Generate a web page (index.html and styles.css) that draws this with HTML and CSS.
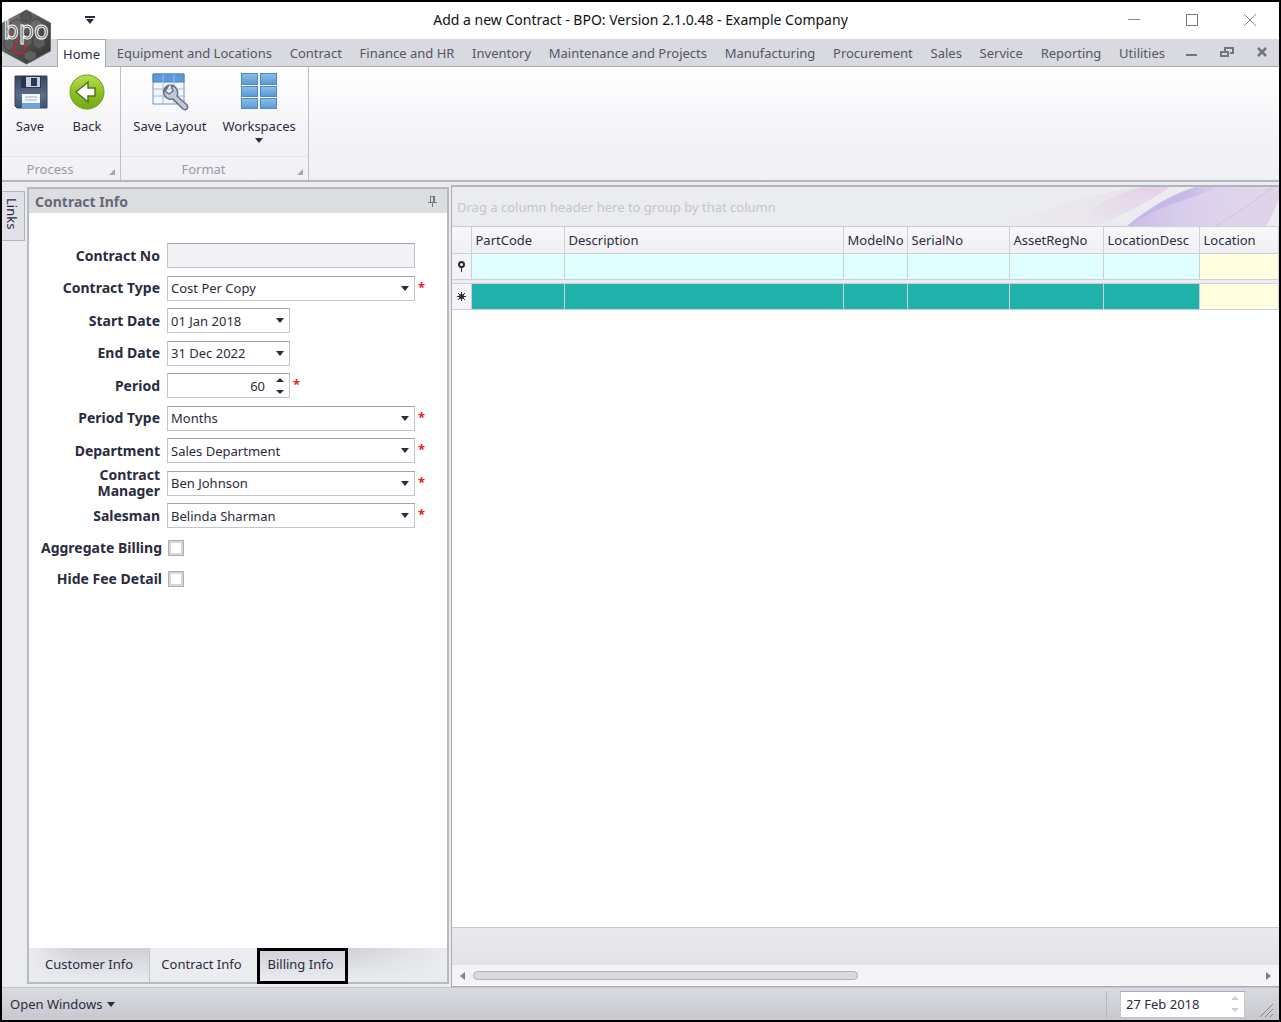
FILE: index.html
```html
<!DOCTYPE html>
<html lang="en">
<head>
    <meta charset="UTF-8">
    <meta name="viewport" content="width=device-width, initial-scale=1.0">
    <title>Add a new Contract - BPO: Version 2.1.0.48 - Example Company</title>
    <link rel="stylesheet" href="styles.css">
</head>
<body>
<div class="window">

    <header class="title-bar">
        <button class="quick-access" aria-label="Customize quick access">
            <svg width="10" height="8" viewBox="0 0 10 8"><path d="M0 0h10v2H0zM1 3h8L5 8z" fill="#2b2b40"/></svg>
        </button>
        <h1>Add a new Contract - BPO: Version 2.1.0.48 - Example Company</h1>
        <div class="window-buttons">
            <button aria-label="Minimize"><svg width="14" height="14" viewBox="0 0 14 14"><path d="M1 6.500h12" stroke="#888" fill="none"/></svg></button>
            <button aria-label="Maximize"><svg width="14" height="14" viewBox="0 0 14 14"><path d="M1.500 1.500h11v11h-11z" stroke="#777" fill="none"/></svg></button>
            <button aria-label="Close"><svg width="14" height="14" viewBox="0 0 14 14"><path d="M1 1l12 12M13 1L1 13" stroke="#888" fill="none"/></svg></button>
        </div>
    </header>

    <!-- Application logo, sits over the title bar and the tabs -->
    <svg class="logo" width="50" height="56" viewBox="0 0 50 56" role="img" aria-label="BPO">
        <defs>
            <linearGradient id="logoFill" x1="0" y1="0" x2="1" y2="1">
                <stop offset="0" stop-color="#858585"/>
                <stop offset=".5" stop-color="#525252"/>
                <stop offset="1" stop-color="#303030"/>
            </linearGradient>
        </defs>
        <path d="M24.500 1L48.500 14v28L24.500 55 .5 42V14z" fill="url(#logoFill)" stroke="#666"/>
        <g fill="#6a6a6a" stroke="#474747">
            <path d="M15 10l6 3v7l-6 4-6-4v-7zM34 10l6 3v7l-6 4-6-4v-7z"/>
            <path d="M24 25l6 3v7l-6 4-6-4v-7zM37 26l6 3v7l-6 4-6-4v-7z" fill="#5c5c5c"/>
            <path d="M7 29l5 3v6l-5 4-5-4v-6zM28 41l6 3v5l-6 4-6-4v-5z" fill="#616161"/>
            <path d="M24 2l5 3v5l-5 3-5-3V5z" fill="#555"/>
        </g>
        <path d="M14 34l4-2 5 3v6l-5 4-5-2-1-5z" fill="none" stroke="#c8262c" stroke-width="1.500"/>
        <text x="24" y="30" text-anchor="middle" class="logo-text">bpo</text>
    </svg>

    <nav class="ribbon-tabs">
        <div class="tab-list">
            <a href="#" class="active">Home</a>
            <a href="#">Equipment and Locations</a>
            <a href="#">Contract</a>
            <a href="#">Finance and HR</a>
            <a href="#">Inventory</a>
            <a href="#">Maintenance and Projects</a>
            <a href="#">Manufacturing</a>
            <a href="#">Procurement</a>
            <a href="#">Sales</a>
            <a href="#">Service</a>
            <a href="#">Reporting</a>
            <a href="#">Utilities</a>
        </div>
        <div class="child-buttons">
            <button aria-label="Minimize document"><svg width="14" height="12" viewBox="0 0 14 12"><path d="M1 7h11v2H1z" fill="#74747f"/></svg></button>
            <button aria-label="Restore document"><svg width="14" height="12" viewBox="0 0 14 12"><path d="M5 4V1h8v5h-3" fill="none" stroke="#74747f" stroke-width="2"/><path d="M1 5h7v4H1z" fill="none" stroke="#74747f" stroke-width="2"/></svg></button>
            <button aria-label="Close document"><svg width="14" height="12" viewBox="0 0 14 12"><path d="M3 1l8 8M11 1L3 9" fill="none" stroke="#74747f" stroke-width="2.500"/></svg></button>
        </div>
    </nav>

    <section class="ribbon">
        <div class="group group-process">
            <div class="group-items">
                <button>
                    <svg width="36" height="40" viewBox="0 0 36 40">
                        <defs><linearGradient id="disk" x1="0" y1="0" x2="0" y2="1"><stop offset="0" stop-color="#39435f"/><stop offset=".6" stop-color="#5c6c8c"/><stop offset="1" stop-color="#3a5478"/></linearGradient></defs>
                        <path d="M3 4h32v32H5l-2-2z" fill="url(#disk)" stroke="#34405b"/>
                        <path d="M9 4h20v12H9z" fill="#2b344c"/>
                        <path d="M14 5h14v10H14z" fill="#c9d0dd"/>
                        <path d="M19 6h6v8h-6z" fill="#2d3650"/>
                        <path d="M10 22h18v14H10z" fill="#f4f8fd"/>
                        <path d="M10 31h18v5H10z" fill="#6ba4da"/>
                        <path d="M13 25h12M13 28h12" stroke="#a3adbd"/>
                    </svg>
                    <span>Save</span>
                </button>
                <button>
                    <svg width="36" height="40" viewBox="0 0 36 40">
                        <defs><linearGradient id="green" x1="0" y1="0" x2="0" y2="1"><stop offset="0" stop-color="#b9e04a"/><stop offset=".5" stop-color="#8cc024"/><stop offset="1" stop-color="#74aa16"/></linearGradient></defs>
                        <circle cx="18" cy="20" r="17" fill="url(#green)" stroke="#6a9a1a"/>
                        <path d="M7 20L19 10v6h7v8h-7v6z" fill="#fff" stroke="#4b7a1c" stroke-width="1.500"/>
                    </svg>
                    <span>Back</span>
                </button>
            </div>
            <div class="group-caption">Process<i class="corner"></i></div>
        </div>
        <div class="group group-format">
            <div class="group-items">
                <button>
                    <svg width="38" height="40" viewBox="0 0 38 40">
                        <path d="M2 2h31v30H2z" fill="#f3f7fc" stroke="#7590ba"/>
                        <path d="M2 2h31v8H2z" fill="#5b9bdb" stroke="#4a7fbd"/>
                        <path d="M2 17h31M2 24h31M12 2v30M23 2v30" stroke="#a6bcdb"/>
                        <path d="M18 13c-4 2-6 5-5 9 1 4 5 6 9 5l10 10c3 2 6-1 4-4L26 24c2-5-1-10-6-11l2 6-4 3-4-3z" fill="#c3c9d4" stroke="#66708a" stroke-width="1.500" stroke-linejoin="round"/>
                    </svg>
                    <span>Save Layout</span>
                </button>
                <button>
                    <svg width="38" height="40" viewBox="0 0 38 40">
                        <defs><linearGradient id="tile" x1="0" y1="0" x2="0" y2="1"><stop offset="0" stop-color="#8cbfea"/><stop offset="1" stop-color="#5a98d3"/></linearGradient></defs>
                        <g fill="url(#tile)" stroke="#4c88c4">
                            <rect x="1.500" y="1.500" width="16" height="11"/><rect x="20.500" y="1.500" width="16" height="11"/>
                            <rect x="1.500" y="14.500" width="16" height="10"/><rect x="20.500" y="14.500" width="16" height="10"/>
                            <rect x="1.500" y="26.500" width="16" height="10"/><rect x="20.500" y="26.500" width="16" height="10"/>
                        </g>
                    </svg>
                    <span>Workspaces</span>
                    <i class="arrow-down"></i>
                </button>
            </div>
            <div class="group-caption">Format<i class="corner"></i></div>
        </div>
    </section>

    <main class="workspace">
        <aside class="side-strip"><button>Links</button></aside>

        <section class="dock-panel">
            <header class="dock-header">
                <h2>Contract Info</h2>
                <button aria-label="Auto hide"><svg width="9" height="12" viewBox="0 0 9 12"><path d="M2.500 1v6M2 1.500h5M0 7.500h9M4.500 8v4" stroke="#777783" fill="none"/><path d="M5 1h2v6H5z" fill="#777783"/></svg></button>
            </header>

            <form class="contract-form">
                <div class="fields">
                    <label for="contractNo">Contract No</label>
                    <div class="field"><input type="text" id="contractNo" disabled></div>

                    <label for="contractType">Contract Type</label>
                    <div class="field"><span class="combo"><select id="contractType"><option>Cost Per Copy</option></select></span><b class="required">*</b></div>

                    <label for="startDate">Start Date</label>
                    <div class="field"><span class="combo short"><input type="text" id="startDate" value="01 Jan 2018"></span></div>

                    <label for="endDate">End Date</label>
                    <div class="field"><span class="combo short"><input type="text" id="endDate" value="31 Dec 2022"></span></div>

                    <label for="period">Period</label>
                    <div class="field"><span class="spinner short"><input type="number" id="period" value="60"></span><b class="required">*</b></div>

                    <label for="periodType">Period Type</label>
                    <div class="field"><span class="combo"><select id="periodType"><option>Months</option></select></span><b class="required">*</b></div>

                    <label for="department">Department</label>
                    <div class="field"><span class="combo"><select id="department"><option>Sales Department</option></select></span><b class="required">*</b></div>

                    <label for="manager">Contract Manager</label>
                    <div class="field"><span class="combo"><select id="manager"><option>Ben Johnson</option></select></span><b class="required">*</b></div>

                    <label for="salesman">Salesman</label>
                    <div class="field"><span class="combo"><select id="salesman"><option>Belinda Sharman</option></select></span><b class="required">*</b></div>
                </div>
                <div class="checks">
                    <label for="aggregate">Aggregate Billing</label>
                    <input type="checkbox" id="aggregate">
                    <label for="hideFee">Hide Fee Detail</label>
                    <input type="checkbox" id="hideFee">
                </div>
            </form>

            <div class="dock-tabs">
                <button class="first">Customer Info</button>
                <button class="active">Contract Info</button>
                <button class="boxed">Billing Info</button>
                <span class="rest"></span>
            </div>
        </section>

        <section class="grid-panel">
            <div class="group-by">
                <svg class="swirl" width="340" height="40" viewBox="0 0 340 40">
                    <defs>
                        <linearGradient id="haze" x1="0" y1="0" x2="1" y2="0"><stop offset="0" stop-color="#ebebef"/><stop offset="1" stop-color="#e8e2ea"/></linearGradient>
                        <linearGradient id="pink" x1="0" y1="1" x2="1" y2="0"><stop offset="0" stop-color="#ebebef"/><stop offset=".5" stop-color="#e7ddea"/><stop offset="1" stop-color="#e6cfe8"/></linearGradient>
                        <linearGradient id="violet" x1="0" y1="0" x2="1" y2="0"><stop offset="0" stop-color="#c9bbe8"/><stop offset=".4" stop-color="#d9cfec"/><stop offset="1" stop-color="#e2d9ec"/></linearGradient>
                        <linearGradient id="edge" x1="0" y1="0" x2="1" y2="0"><stop offset="0" stop-color="#c4b3e7"/><stop offset=".7" stop-color="#c9baea"/><stop offset="1" stop-color="#d9cfec"/></linearGradient>
                    </defs>
                    <path d="M60 40Q140 8 200 0h30Q190 22 150 40z" fill="url(#haze)"/>
                    <path d="M130 40Q165 8 205 0h26Q200 22 155 40z" fill="url(#pink)"/>
                    <path d="M187 40Q220 12 256 0h84v12Q332 30 326 40z" fill="url(#violet)"/>
                    <path d="M187 40Q220 12 256 0h22Q262 8 242 14 212 24 187 40z" fill="url(#edge)"/>
                    <path d="M275 40Q306 22 330 0h10v10Q334 30 326 40z" fill="#dfd3e9"/>
                    <path d="M275 40Q306 22 334 0" fill="none" stroke="#d3c1e2"/>
                </svg>
                <span>Drag a column header here to group by that column</span>
            </div>
            <table>
                <colgroup>
                    <col class="c-mark"><col class="c-part"><col class="c-desc"><col class="c-model"><col class="c-serial"><col class="c-asset"><col class="c-locdesc"><col>
                </colgroup>
                <thead>
                    <tr><th></th><th>PartCode</th><th>Description</th><th>ModelNo</th><th>SerialNo</th><th>AssetRegNo</th><th>LocationDesc</th><th>Location</th></tr>
                </thead>
                <tbody>
                    <tr class="filter-row">
                        <td class="mark"><svg width="9" height="11" viewBox="0 0 9 11"><circle cx="4.500" cy="3.500" r="2.500" fill="none" stroke="#2b2b40" stroke-width="2"/><path d="M2 5h5L5 7v4H4V7z" fill="#2b2b40"/></svg></td>
                        <td></td><td></td><td></td><td></td><td></td><td></td><td class="location"></td>
                    </tr>
                    <tr class="separator"><td colspan="8"></td></tr>
                    <tr class="new-row">
                        <td class="mark"><svg width="9" height="9" viewBox="0 0 9 9"><circle cx="4.500" cy="4.500" r="2.500" fill="#2b2b40"/><path d="M4.500 0v9M0 4.500h9M1 1l7 7M8 1L1 8" stroke="#2b2b40" fill="none"/></svg></td>
                        <td></td><td></td><td></td><td></td><td></td><td></td><td class="location"></td>
                    </tr>
                </tbody>
            </table>
            <div class="grid-body"></div>
            <div class="grid-footer"></div>
            <div class="scrollbar">
                <button class="left" aria-label="Scroll left"></button>
                <div class="track"><div class="thumb"></div></div>
                <button class="right" aria-label="Scroll right"></button>
            </div>
        </section>
    </main>

    <footer class="status-bar">
        <button class="open-windows">Open Windows<i class="arrow-down"></i></button>
        <div class="status-right">
            <span class="spinner dim"><input type="text" value="27 Feb 2018" aria-label="Working date"></span>
            <svg width="16" height="16" viewBox="0 0 16 16"><path d="M1 15L14 2M6 15l8-8M11 15l3-3" stroke="#85858f" fill="none"/></svg>
        </div>
    </footer>

</div>
</body>
</html>
```

FILE: styles.css
```css
* {
    box-sizing: border-box;
}

body {
    margin: 0;
    font-family: "Noto Sans", "Open Sans", sans-serif;
    font-size: 13px;
    color: #2b2b40;
}

button, input, select {
    font: inherit;
    color: inherit;
    margin: 0;
}

button {
    background: none;
    border: none;
    padding: 0;
}

svg {
    display: block;
}

h1, h2 {
    margin: 0;
}

.window {
    position: relative;
    display: flex;
    flex-direction: column;
    min-height: 100vh;
    border: 2px solid #000;
    background: #ebecf0;
}

/* Title bar */
.title-bar {
    display: grid;
    grid-template-columns: 1fr auto 1fr;
    align-items: center;
    height: 37px;
    padding-bottom: 2px;
    background: #fff;
}

.title-bar h1 {
    font-size: 14px;
    font-weight: normal;
    color: #111;
}

.quick-access {
    justify-self: start;
    margin-left: 83px;
}

.window-buttons {
    display: flex;
    justify-content: flex-end;
    gap: 44px;
    padding-right: 22px;
}

.logo {
    position: absolute;
    top: 7px;
    left: 0;
    z-index: 1;
}

.logo-text {
    font-family: "DejaVu Sans", sans-serif;
    font-size: 24px;
    fill: #555;
    stroke: #fff;
}

/* Ribbon */
.ribbon-tabs {
    display: flex;
    height: 28px;
    padding: 0 10px 0 55px;
    background: #d9dae0;
    border-bottom: 1px solid #a9aab3;
}

.tab-list {
    display: flex;
    flex: 1;
    justify-content: space-between;
}

.tab-list a {
    color: #555565;
    text-decoration: none;
    line-height: 29px;
}

.tab-list .active {
    height: 28px;
    padding: 0 5px;
    margin-right: -7px;
    background: #fff;
    border: 1px solid #a9aab3;
    border-bottom: none;
    color: #2b2b40;
    line-height: 28px;
}

.child-buttons {
    display: flex;
    align-items: center;
    gap: 21px;
    margin-left: 20px;
}

.ribbon {
    display: flex;
    height: 115px;
    background: linear-gradient(#fff, #f4f4f8 60%, #f0f0f5);
    border-bottom: 2px solid #b5b6bd;
}

.group {
    display: flex;
    flex-direction: column;
    justify-content: space-between;
    border-right: 1px solid #bfc0c8;
}

.group-process {
    width: 119px;
}

.group-format {
    width: 188px;
}

.group-items {
    display: flex;
    justify-content: center;
    gap: 16px;
    padding-top: 5px;
}

.group-process .group-items {
    gap: 21px;
    padding-right: 5px;
}

.group-items button {
    display: flex;
    flex-direction: column;
    align-items: center;
    line-height: 18px;
}

.group-items span {
    margin-top: 5px;
}

.group-items .arrow-down {
    margin-top: 3px;
}

.group-caption {
    position: relative;
    height: 24px;
    padding-right: 22px;
    line-height: 24px;
    text-align: center;
    color: #9a9aa6;
    border-top: 1px solid #e4e4ea;
}

.corner {
    position: absolute;
    right: 5px;
    bottom: 5px;
    border: 3px solid;
    border-color: transparent #a5a5ad #a5a5ad transparent;
}

.arrow-down {
    display: inline-block;
    border: 4px solid transparent;
    border-top: 5px solid #2b2b40;
    border-bottom: none;
}

/* Workspace */
.workspace {
    display: flex;
    flex: 1;
    padding-top: 3px;
}

.side-strip {
    width: 25px;
    padding-top: 6px;
}

.side-strip button {
    width: 23px;
    height: 50px;
    padding-right: 2px;
    padding-bottom: 4px;
    writing-mode: vertical-rl;
    background: #e1e2e7;
    border: 1px solid #b0b1b9;
    border-left: none;
}

.dock-panel {
    display: flex;
    flex-direction: column;
    width: 422px;
    margin: 2px 2px 3px 0;
    background: #fff;
    border: 2px solid #b9babf;
}

.dock-header {
    display: flex;
    align-items: center;
    justify-content: space-between;
    height: 24px;
    padding: 0 10px 0 6px;
    background: #dcdde1;
}

.dock-header h2 {
    font-size: 14px;
    color: #686878;
}

.contract-form {
    flex: 1;
    padding: 30px 0 0 5px;
}

.fields {
    display: grid;
    grid-template-columns: 126px 1fr;
    grid-auto-rows: 25px;
    align-content: space-between;
    align-items: center;
    column-gap: 7px;
    height: 285px;
}

.contract-form label {
    font-size: 14px;
    font-weight: bold;
    line-height: 16px;
    text-align: right;
}

.field {
    display: flex;
    height: 25px;
}

.field > input, .field .combo, .field .spinner {
    width: 248px;
    height: 25px;
    background: #fff;
    border: 1px solid #c3c4cf;
    border-top-color: #a0a1a9;
}

.field > input:disabled {
    background: #f3f3f6;
}

.field .short {
    width: 123px;
}

.combo, .spinner {
    position: relative;
    display: block;
}

.combo select, .combo input, .spinner input {
    display: block;
    width: 100%;
    height: 100%;
    padding: 0 20px 0 3px;
    background: none;
    border: none;
    appearance: none;
}

.combo::after, .spinner::before, .spinner::after {
    content: "";
    position: absolute;
    right: 5px;
    top: 9px;
    border: 4px solid transparent;
    border-top: 5px solid #2b2b40;
    border-bottom: none;
}

.spinner::before {
    top: 4px;
    border-top: none;
    border-bottom: 4px solid #2b2b40;
}

.spinner::after {
    top: 16px;
    border-top-width: 4px;
}

.spinner input[type="number"] {
    padding-right: 24px;
    text-align: right;
    appearance: textfield;
}

.spinner input::-webkit-inner-spin-button {
    display: none;
}

.required {
    margin-left: 3px;
    line-height: 22px;
    color: #f02020;
}

.checks {
    display: grid;
    grid-template-columns: 128px 16px;
    grid-auto-rows: 16px;
    gap: 15px 6px;
    padding-top: 12px;
}

.checks input {
    width: 16px;
    height: 16px;
    appearance: none;
    background: #fff;
    border: 1px solid #adaeb6;
    box-shadow: inset 0 0 0 2px #d5d6dd;
}

.dock-tabs {
    display: flex;
    height: 34px;
    background: #ebecf0;
}

.dock-tabs button {
    padding: 0 0 2px;
}

.dock-tabs .active {
    width: 107px;
    padding-right: 4px;
}

.dock-tabs .first {
    width: 121px;
    background: linear-gradient(to right, #ebecf0, transparent 40%), linear-gradient(#cfd0d5, #ebecf0);
    border-right: 1px solid #c3c4ca;
}

.dock-tabs .boxed {
    width: 91px;
    margin-bottom: -2px;
    padding: 0 4px 4px 0;
    background: linear-gradient(#d2d3d8, #ebecf0);
    border: 3px solid #000;
}

.dock-tabs .rest {
    flex: 1;
    background: linear-gradient(to right, transparent, #ebecf0), linear-gradient(#cfd0d5, #ebecf0);
}

/* Grid */
.grid-panel {
    display: flex;
    flex-direction: column;
    flex: 1;
    min-width: 0;
    background: #fff;
    border: 1px solid #a9aab3;
    border-top: 2px solid #b3b4bb;
    border-right: none;
}

.group-by {
    position: relative;
    height: 39px;
    padding-left: 5px;
    line-height: 40px;
    color: #c3c4cc;
    background: #ebecf0;
    overflow: hidden;
}

.swirl {
    position: absolute;
    top: 0;
    right: 0;
}

table {
    width: 100%;
    table-layout: fixed;
    border-collapse: collapse;
}

.c-mark { width: 19px; }
.c-part { width: 93px; }
.c-desc { width: 279px; }
.c-model { width: 64px; }
.c-serial { width: 102px; }
.c-asset { width: 94px; }
.c-locdesc { width: 96px; }

th, td {
    height: 26px;
    padding: 0 4px;
    border: 1px solid #cfd0d7;
    border-left: none;
}

th {
    height: 27px;
    font-weight: normal;
    text-align: left;
    white-space: nowrap;
    background: linear-gradient(#f8f8fa, #f0f0f4);
}

.filter-row td {
    background: #e0ffff;
}

.new-row td {
    background: #20b2aa;
}

.separator td {
    height: 4px;
    padding: 0;
    background: #ebecf0;
}

.filter-row .mark, .new-row .mark {
    padding: 0 0 0 5px;
    background: #f4f4f7;
}

.filter-row .location, .new-row .location {
    background: #ffffe0;
}

.grid-body {
    flex: 1;
}

.grid-footer {
    height: 38px;
    background: linear-gradient(#eaeaee, #e2e3e7);
    border-top: 1px solid #c8c9d0;
}

.scrollbar {
    display: flex;
    align-items: center;
    height: 21px;
    padding: 0 8px;
    background: #f4f4f7;
}

.scrollbar button {
    border: 4px solid transparent;
}

.scrollbar .left {
    border-right: 5px solid #80808a;
    border-left: none;
}

.scrollbar .right {
    border-left: 5px solid #80808a;
    border-right: none;
}

.track {
    flex: 1;
    padding: 0 8px;
}

.thumb {
    width: 49%;
    height: 9px;
    background: #d9dae0;
    border: 1px solid #b0b1b9;
    border-radius: 5px;
}

/* Status bar */
.status-bar {
    display: flex;
    align-items: center;
    justify-content: space-between;
    height: 33px;
    padding: 0 4px 0 8px;
    background: linear-gradient(#d9dae0, #c8c8d0);
    border-top: 1px solid #c3c4ca;
}

.open-windows {
    display: flex;
    align-items: center;
    gap: 5px;
}

.status-right {
    display: flex;
    align-items: flex-end;
    gap: 14px;
    padding-left: 13px;
    border-left: 1px solid #b5b6bd;
}

.status-right .spinner {
    width: 125px;
    height: 27px;
    background: #fff;
    border: 1px solid #c3c4cf;
    border-top-color: #a9aab3;
}

.status-right .spinner input {
    padding-left: 5px;
}

.status-right .dim::before {
    border-bottom-color: #cfcfd2;
}

.status-right .dim::after {
    border-top-color: #cfcfd2;
}
```
